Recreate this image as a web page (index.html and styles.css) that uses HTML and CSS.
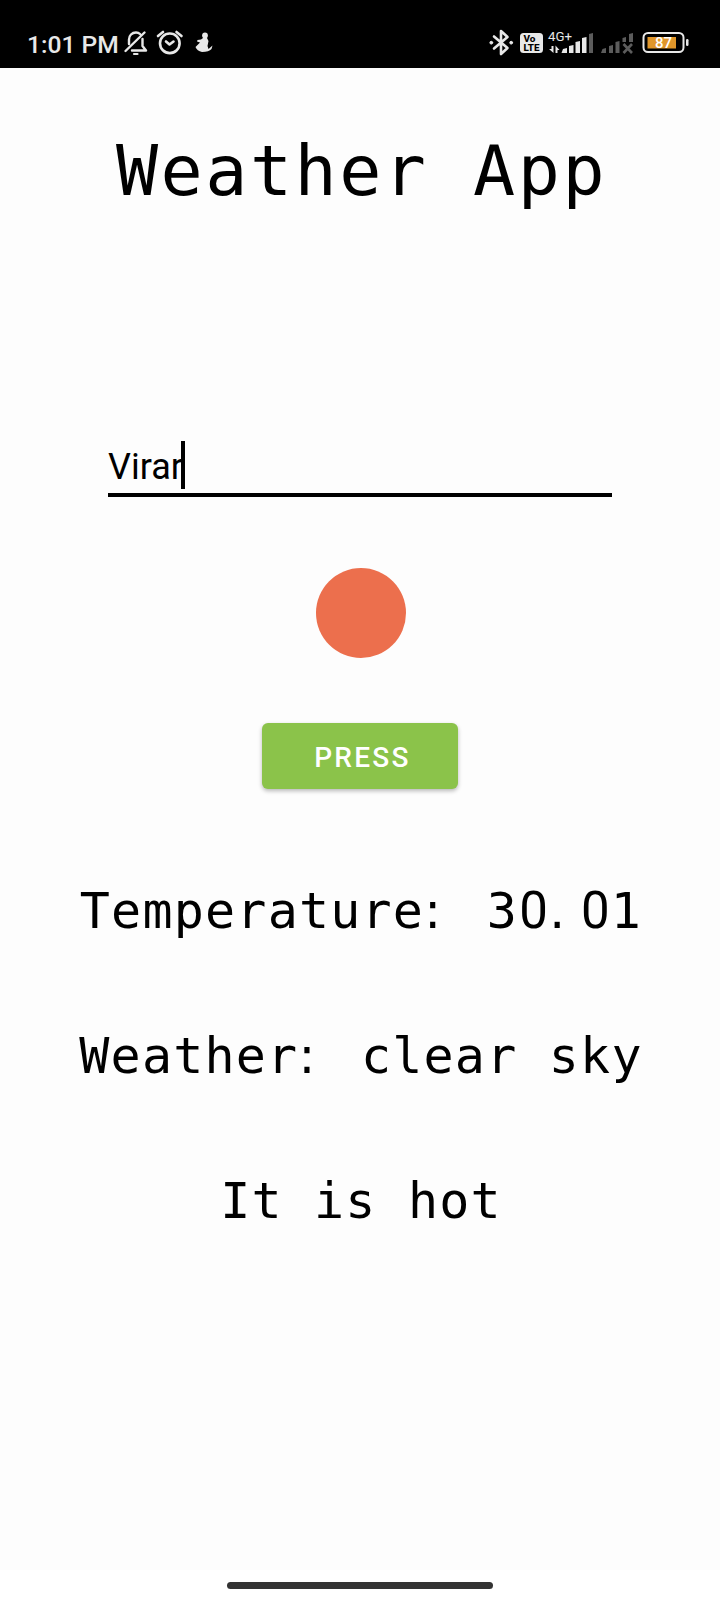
FILE: index.html
```html
<!DOCTYPE html>
<html lang="en">
<head>
<meta charset="utf-8">
<title>Weather App</title>
<link rel="stylesheet" href="styles.css">
</head>
<body>
<div class="screen">
  <header class="status">
    <div class="status-group">
      <span class="clock">1:01 PM</span>
      <svg class="icon" width="30" height="68" viewBox="122 0 30 68" fill="none" stroke="#e8e8e8" stroke-width="2.400" stroke-linecap="round" stroke-linejoin="round">
        <path d="M129 44V39.500C129 35.500 132 32.500 136 32.500C137.500 32.500 139 33 140 34M142.500 39V46L146 50.500H132M144.500 32.500L125.500 51"/>
        <path d="M134 54H137.500" stroke-width="2.200"/>
      </svg>
      <svg class="icon" width="36" height="68" viewBox="152 0 36 68" fill="none" stroke="#e8e8e8" stroke-width="2.600" stroke-linecap="round" stroke-linejoin="round">
        <circle cx="169.800" cy="43.300" r="9.800"/>
        <path d="M158 36L163 32M176.500 32L181.500 36M166 41.500L169.500 44.500L173.500 41.500"/>
      </svg>
      <svg class="icon" width="30" height="68" viewBox="188 0 30 68" fill="#e8e8e8">
        <circle cx="205" cy="35.500" r="2.900"/>
        <path d="M203 38H207L208.500 41L207.500 46L208.500 49L212.500 45.500L211.500 49Q209 52 202 52Q197 51 195.500 47L200 42.500L197 41.500L197.500 40L201 39.500Z"/>
      </svg>
    </div>
    <div class="status-group">
      <svg class="icon" width="30" height="68" viewBox="487 0 30 68" fill="none" stroke="#e8e8e8" stroke-width="2.600" stroke-linejoin="round" stroke-linecap="round">
        <path d="M494 36.500L507.500 48L501 54V31L507.500 37L494 48.500"/>
        <circle cx="491.300" cy="42.700" r="1.400" fill="#e8e8e8" stroke-width="1"/>
        <circle cx="511.200" cy="42.700" r="1.400" fill="#e8e8e8" stroke-width="1"/>
      </svg>
      <svg class="icon" width="29" height="68" viewBox="517 0 29 68">
        <rect x="520" y="33" width="23" height="20" rx="3.500" fill="#e8e8e8"/>
        <text class="volte" x="523.500" y="42" textLength="12" lengthAdjust="spacingAndGlyphs">Vo</text>
        <text class="volte" x="523.500" y="51" textLength="16" lengthAdjust="spacingAndGlyphs">LTE</text>
      </svg>
      <svg class="icon" width="51" height="68" viewBox="546 0 51 68" fill="#e8e8e8">
        <text class="network" x="548" y="40.500" textLength="24" lengthAdjust="spacingAndGlyphs">4G+</text>
        <path d="M551.500 46H553.500V53L549 49H551.500ZM555.500 53V45.500L559.500 50H557.500V53Z"/>
        <path d="M561.500 53L563 49L567 48V53ZM569 46L573.500 45V53H569ZM575.500 42L580 41V53H575.500ZM582 38L586.500 37V53H582Z"/>
        <path d="M589 34L593 33V53H589Z" fill="#5c5c5c"/>
      </svg>
      <svg class="icon" width="40" height="68" viewBox="597 0 40 68" fill="#5c5c5c">
        <path d="M601 53L602.500 49L606 48V53ZM609 46L613 45V53H609ZM615.500 42L619.500 41V53H615.500ZM622.500 38L626 37V42H622.500ZM629 34L633 33V42H629Z"/>
        <path d="M623.500 44L632 53M632 44L623.500 53" stroke="#5c5c5c" stroke-width="2.600"/>
      </svg>
      <svg class="icon" width="55" height="68" viewBox="637 0 55 68">
        <rect x="643.500" y="33" width="40" height="19" rx="4.500" fill="none" stroke="#e8e8e8" stroke-width="2"/>
        <rect x="647.500" y="37" width="28.500" height="11.500" fill="#e0962a"/>
        <rect x="686" y="39" width="2.500" height="7" rx="1.200" fill="#e8e8e8"/>
        <text class="battery-level" x="655" y="47.800" textLength="17" lengthAdjust="spacingAndGlyphs">87</text>
      </svg>
    </div>
  </header>
  <main class="content">
    <h1 class="title">Weather App</h1>
    <div class="field"><span>Virar</span><i class="caret"></i></div>
    <div class="dot"></div>
    <button class="press">PRESS</button>
    <p class="line">Temperature<span class="mark">:</span> 3<span class="zero">0</span><span class="mark">.</span><span class="zero">0</span>1</p>
    <p class="line">Weather<span class="mark">:</span> clear sky</p>
    <p class="line">It is hot</p>
  </main>
  <footer class="nav"><div class="handle"></div></footer>
</div>
</body>
</html>
```
FILE: styles.css
```css
* { box-sizing: border-box; }
body { margin: 0; }
.screen {
  width: 720px;
  height: 1600px;
  display: flex;
  flex-direction: column;
  background: #fdfdfd;
  color: #000;
  font-family: Roboto, sans-serif;
  overflow: hidden;
}
.status {
  height: 68px;
  flex: none;
  display: flex;
  justify-content: space-between;
  padding: 0 28px 0 27px;
  background: #000;
  color: #e8e8e8;
}
.status-group { display: flex; }
.icon { display: block; flex: none; }
.clock {
  width: 95px;
  padding-top: 29px;
  font-size: 24.600px;
  font-weight: 500;
  line-height: 31px;
  white-space: nowrap;
}
.volte { font: 800 9.500px Roboto, sans-serif; fill: #000; }
.network { font: 400 13px Roboto, sans-serif; }
.battery-level { font: 500 14px Roboto, sans-serif; fill: #fff; }
.content {
  flex: 1;
  display: flex;
  flex-direction: column;
  align-items: center;
}
.title {
  margin: 62px 0 0 3px;
  font: 400 70px/82px "DejaVu Sans Mono", monospace;
  letter-spacing: 2.500px;
  white-space: pre;
}
.field {
  width: 504px;
  height: 67px;
  margin-top: 218px;
  padding-top: 15px;
  display: flex;
  align-items: flex-start;
  border-bottom: 4px solid #000;
  font-size: 36px;
  line-height: 45px;
}
.caret {
  width: 4px;
  height: 48px;
  margin: -4px 0 0 -2px;
  background: #000;
}
.dot {
  width: 90px;
  height: 90px;
  margin: 71px 0 0 2px;
  border-radius: 50%;
  background: #ec6f4d;
}
.press {
  width: 196px;
  height: 66px;
  margin: 65px 0 32px;
  padding: 3px 0 0 5px;
  border: 0;
  border-radius: 6px;
  background: #8bc34a;
  box-shadow: 0 2px 4px rgba(0, 0, 0, .28);
  color: #fff;
  font: 500 28px/32px Roboto, sans-serif;
  letter-spacing: 2.300px;
}
.line {
  height: 145px;
  margin: 0 0 0 2px;
  font: 400 50px/180px "DejaVu Sans Mono", monospace;
  letter-spacing: 1.200px;
  white-space: pre;
}
/* Punctuation sits at the left of its character cell. */
.mark {
  margin-right: 13.200px;
  font-family: "DejaVu Sans", sans-serif;
}
/* Undotted zero, kept to the monospaced cell width. */
.zero {
  display: inline-block;
  width: 31.300px;
  font: 400 51px/60px Roboto, sans-serif;
  letter-spacing: 0;
  text-align: center;
}
.nav {
  height: 30px;
  flex: none;
  padding-top: 12px;
  background: #fff;
}
.handle {
  width: 266px;
  height: 7px;
  margin: 0 auto;
  border-radius: 4px;
  background: #333;
}
```
